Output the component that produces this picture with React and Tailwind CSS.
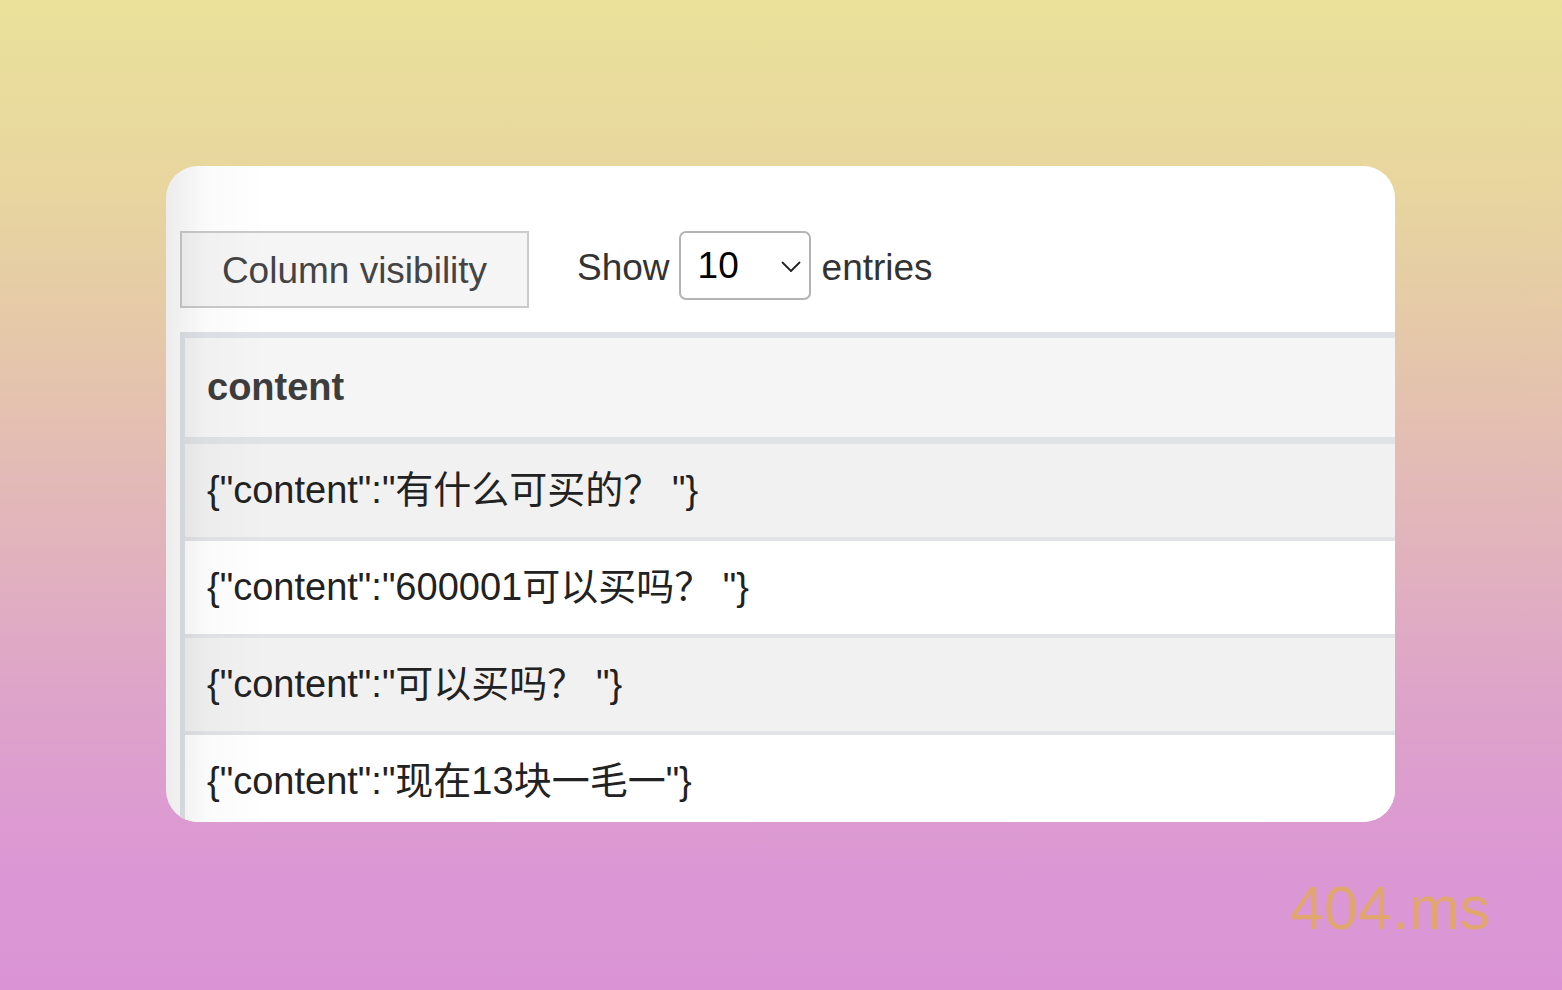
import React from 'react';

const rows = [
  { text: '{"content":"有什么可买的？ "}', striped: true },
  { text: '{"content":"600001可以买吗？ "}', striped: false },
  { text: '{"content":"可以买吗？ "}', striped: true },
  { text: '{"content":"现在13块一毛一"}', striped: false },
];

const font = { fontFamily: '"Liberation Sans", "Noto Sans CJK SC", sans-serif' };

export default function App() {
  return (
    <div
      className="w-[1562px] h-[990px] overflow-hidden flex flex-col bg-[linear-gradient(to_bottom,#eae19a_0%,#e8d69e_18%,#e5c8a9_34%,#e2b6ba_52%,#dea4c9_70%,#db97d4_88%,#da94d6_100%)]"
      style={font}
    >
      {/* Card */}
      <div className="relative mt-[166px] ml-[166px] w-[1229px] h-[656px] shrink-0 rounded-[32px] overflow-hidden bg-white">
        <div className="pl-[14px] pt-[65px]">
          {/* Toolbar */}
          <div className="flex items-center h-[77px]">
            <button className="w-[349px] h-[77px] border-2 border-[#cacaca] bg-[#f5f5f5] text-[37px] text-[#444] flex items-center justify-center pt-[2px]">
              Column visibility
            </button>
            <span className="ml-[48px] text-[37px] text-[#333] -mt-[4px]">Show</span>
            <div className="ml-[9px] -mt-[8px] w-[132px] h-[69px] border-2 border-[#b4b4b4] rounded-[7px] bg-white flex items-center justify-between pl-[17px] pr-[8px]">
              <span className="text-[37px] text-black">10</span>
              <svg width="20" height="12" viewBox="0 0 20 12" fill="none" className="mt-[2px]">
                <path d="M1.5 1.5 L10 10 L18.5 1.5" stroke="#222" strokeWidth="1.8" strokeLinecap="round" strokeLinejoin="round" />
              </svg>
            </div>
            <span className="ml-[11px] text-[37px] text-[#333] -mt-[4px]">entries</span>
          </div>

          {/* Table */}
          <div className="mt-[24px] border-l-[5px] border-t-[6px] border-[#dfe2e6]">
            <div className="h-[106px] bg-[#f5f5f5] flex items-center pl-[22px] border-b-[7px] border-[#e0e2e6]">
              <span className="text-[38px] font-bold text-[#3d3d3d]">content</span>
            </div>
            {rows.map((r, i) => (
              <div
                key={i}
                className={`h-[97px] flex items-center pl-[22px] border-b-[4px] border-[#e1e3e7] ${r.striped ? 'bg-[#f1f1f1]' : 'bg-white'}`}
              >
                <span className="text-[38px] text-[#222] whitespace-pre">{r.text}</span>
              </div>
            ))}
          </div>
        </div>
        {/* left-edge shading */}
        <div className="pointer-events-none absolute inset-y-0 left-0 w-[100px] bg-[linear-gradient(to_right,rgba(0,0,0,0.075),rgba(0,0,0,0.02)_40%,rgba(0,0,0,0))]" />
      </div>

      {/* Watermark */}
      <div className="flex justify-end pr-[72px] mt-[56px]">
        <span className="text-[61px] leading-none text-[#e0a66e]">404.ms</span>
      </div>
    </div>
  );
}
